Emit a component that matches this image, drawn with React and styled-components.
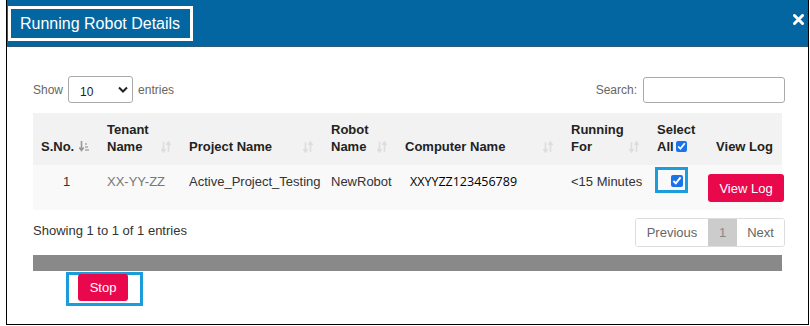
import React from "react"
import styled, { createGlobalStyle } from "styled-components"

const GlobalStyle = createGlobalStyle`
  body {
    margin: 0;
    background: #fff;
    font-family: "Liberation Sans", Arial, sans-serif;
    font-size: 13px;
    color: #333;
  }
  * {
    box-sizing: border-box;
  }
`

const columns = [
  { title: ["S.No."], width: 66, sort: "active" },
  { title: ["Tenant", "Name"], width: 82, sort: "both" },
  { title: ["Project Name"], width: 142, sort: "both" },
  { title: ["Robot", "Name"], width: 74, sort: "both" },
  { title: ["Computer Name"], width: 166, sort: "both" },
  { title: ["Running", "For"], width: 86, sort: "both" },
  { title: ["Select", "All"], width: 58, check: true },
  { title: ["View Log"], width: 75, center: true },
]

const rows = [
  {
    sno: 1,
    tenant: "XX-YY-ZZ",
    project: "Active_Project_Testing",
    robot: "NewRobot",
    computer: "XXYYZZ123456789",
    running: "<15 Minutes",
  },
]

const SortIcon = ({ active }) =>
  active ? (
    <svg width="10" height="12" viewBox="0 0 10 12">
      <path d="M2.5 0v9M0.3 6.5l2.2 3 2.2-3" stroke="#999" strokeWidth="1.6" fill="none" />
      <path d="M6 3h2M6 6h3M6 9h4" stroke="#aaa" strokeWidth="1.4" />
    </svg>
  ) : (
    <svg width="10" height="12" viewBox="0 0 10 12">
      <path d="M2.5 1v10M0.5 8l2 3 2-3" stroke="#ddd" strokeWidth="1.6" fill="none" />
      <path d="M7.5 11V1M5.5 4l2-3 2 3" stroke="#ddd" strokeWidth="1.6" fill="none" />
    </svg>
  )

const Chevron = () => (
  <svg width="10" height="7" viewBox="0 0 10 7">
    <path d="M1 1.5l4 4 4-4" stroke="#222" strokeWidth="2" fill="none" />
  </svg>
)

const CloseIcon = () => (
  <svg width="11" height="11" viewBox="0 0 11 11">
    <path d="M1.5 1.5l8 8M9.5 1.5l-8 8" stroke="#fff" strokeWidth="3" strokeLinecap="round" />
  </svg>
)

const App = () => (
  <>
    <GlobalStyle />
    <Modal>
      <Header>
        <TitleBox>Running Robot Details</TitleBox>
        <Close>
          <CloseIcon />
        </Close>
      </Header>
      <Body>
        <Toolbar>
          <Label>
            Show
            <SelectWrap>
              <Select defaultValue="10">
                <option>10</option>
                <option>25</option>
                <option>50</option>
              </Select>
              <ChevronSpot>
                <Chevron />
              </ChevronSpot>
            </SelectWrap>
            entries
          </Label>
          <Label>
            Search:
            <SearchInput />
          </Label>
        </Toolbar>

        <Table>
          <colgroup>
            {columns.map((c, i) => (
              <col key={i} style={{ width: c.width }} />
            ))}
          </colgroup>
          <thead>
            <tr>
              {columns.map((c, i) => (
                <Th key={i} $center={c.center}>
                  <ThInner $center={c.center}>
                    <span>
                      {c.title.map((t, j) => (
                        <React.Fragment key={j}>
                          {j > 0 && <br />}
                          {t}
                          {c.check && j === c.title.length - 1 && <HeadCheck type="checkbox" defaultChecked />}
                        </React.Fragment>
                      ))}
                    </span>
                    {c.sort && (
                      <SortSpot>
                        <SortIcon active={c.sort === "active"} />
                      </SortSpot>
                    )}
                  </ThInner>
                </Th>
              ))}
            </tr>
          </thead>
          <tbody>
            {rows.map(r => (
              <tr key={r.sno}>
                <Td>{r.sno}</Td>
                <Td $muted>{r.tenant}</Td>
                <Td>{r.project}</Td>
                <Td>{r.robot}</Td>
                <Td>
                  <Computer>{r.computer}</Computer>
                </Td>
                <Td>{r.running}</Td>
                <Td>
                  <Highlight $check>
                    <RowCheck type="checkbox" defaultChecked />
                  </Highlight>
                </Td>
                <Td>
                  <RedButton>View Log</RedButton>
                </Td>
              </tr>
            ))}
          </tbody>
        </Table>

        <FooterRow>
          <Info>Showing 1 to 1 of 1 entries</Info>
          <Pager>
            <PageItem $w={72}>Previous</PageItem>
            <PageItem $w={29} $current>1</PageItem>
            <PageItem $w={47}>Next</PageItem>
          </Pager>
        </FooterRow>

        <GrayBar />

        <Highlight $stop>
          <RedButton $small>Stop</RedButton>
        </Highlight>
      </Body>
    </Modal>
  </>
)

const Modal = styled.div`
  margin: 0 1px 0 6px;
  height: 325px;
  border: 1px solid #000;
  border-top: none;
  display: flex;
  flex-direction: column;
`

const Header = styled.div`
  height: 47px;
  background: #0466a0;
  border-bottom: 1px solid #2d5878;
  display: flex;
  align-items: flex-start;
  justify-content: space-between;
  padding: 6px 4px 0 1px;
`

const TitleBox = styled.div`
  height: 35px;
  border: 3px solid #fff;
  padding: 0 10px 0 9px;
  display: flex;
  align-items: center;
  color: #fff;
  font-size: 16px;
`

const Close = styled.div`
  display: flex;
  margin-top: 8px;
  cursor: pointer;
`

const Body = styled.div`
  padding: 29px 26px 0 26px;
`

const Toolbar = styled.div`
  display: flex;
  justify-content: space-between;
  align-items: center;
  height: 27px;
  margin-right: -3px;
`

const Label = styled.label`
  display: flex;
  align-items: center;
  gap: 5px;
  color: #666;
  font-size: 12px;
`

const SelectWrap = styled.div`
  position: relative;
  display: flex;
`

const Select = styled.select`
  appearance: none;
  width: 65px;
  height: 27px;
  border: 1px solid #aaa;
  border-radius: 3px;
  background: #fff;
  padding: 4px 0 0 11px;
  font-family: "Liberation Sans", Arial, sans-serif;
  font-size: 12px;
  color: #222;
`

const ChevronSpot = styled.span`
  position: absolute;
  right: 5px;
  top: 10px;
  pointer-events: none;
  display: flex;
`

const SearchInput = styled.input`
  width: 142px;
  height: 26px;
  border: 1px solid #aaa;
  border-radius: 3px;
  margin-left: 1px;
`

const Table = styled.table`
  margin-top: 10px;
  width: 749px;
  table-layout: fixed;
  border-collapse: collapse;
  background: #f9f9f9;
`

const Th = styled.th`
  background: #f2f2f2;
  height: 52px;
  padding: 0 8px 10px 8px;
  vertical-align: bottom;
  text-align: ${p => (p.$center ? "center" : "left")};
  font-size: 13px;
  line-height: 17px;
  color: #222;
`

const ThInner = styled.div`
  display: flex;
  align-items: flex-end;
  justify-content: ${p => (p.$center ? "center" : "space-between")};
  white-space: nowrap;
`

const SortSpot = styled.span`
  display: flex;
  margin: 0 2px 2px 0;
`

const HeadCheck = styled.input`
  width: 11px;
  height: 11px;
  margin: 0 0 0 2px;
  vertical-align: -1px;
  accent-color: #1a73e8;
`

const Td = styled.td`
  padding: 8px;
  height: 45px;
  vertical-align: top;
  line-height: 18px;
  white-space: nowrap;
  color: ${p => (p.$muted ? "#777" : "#333")};
  &:first-child {
    padding-left: 30px;
  }
`

const Computer = styled.span`
  display: inline-block;
  margin-left: 5px;
  font-family: "Open Sans", sans-serif;
  font-size: 12.5px;
  color: #000;
`

const Highlight = styled.div`
  display: inline-flex;
  border: 3px solid #1b9ddb;
  ${p =>
    p.$check &&
    `
    width: 33px;
    height: 26px;
    margin: -6px 0 0 -2px;
    justify-content: flex-end;
    align-items: center;
    padding-right: 2px;
  `}
  ${p =>
    p.$stop &&
    `
    width: 77px;
    height: 34px;
    margin: 1px 0 0 33px;
    padding-left: 9px;
    align-items: flex-start;
  `}
`

const RowCheck = styled.input`
  width: 12px;
  height: 12px;
  margin: 1px 0 0 0;
  accent-color: #1a73e8;
`

const RedButton = styled.button`
  background: #e9084c;
  color: #fff;
  border: none;
  border-radius: 3px;
  font-family: "Liberation Sans", Arial, sans-serif;
  font-size: 13px;
  height: ${p => (p.$small ? "27px" : "28px")};
  width: ${p => (p.$small ? "50px" : "76px")};
  margin-top: ${p => (p.$small ? "-1px" : "1px")};
  margin-left: ${p => (p.$small ? "0" : "-7px")};
  padding: 0;
  cursor: pointer;
`

const FooterRow = styled.div`
  display: flex;
  justify-content: space-between;
  align-items: center;
  margin-top: 8px;
  margin-right: -3px;
`

const Info = styled.div`
  color: #333;
  font-size: 13px;
  margin-top: -4px;
`

const Pager = styled.div`
  display: flex;
  border: 1px solid #ddd;
  border-radius: 3px;
  height: 29px;
  overflow: hidden;
`

const PageItem = styled.span`
  display: flex;
  align-items: center;
  justify-content: center;
  width: ${p => p.$w}px;
  color: ${p => (p.$current ? "#888" : "#666")};
  background: ${p => (p.$current ? "#ccc" : "#fff")};
  font-size: 13px;
`

const GrayBar = styled.div`
  margin-top: 8px;
  width: 749px;
  height: 16px;
  background: #898989;
`

export default App
